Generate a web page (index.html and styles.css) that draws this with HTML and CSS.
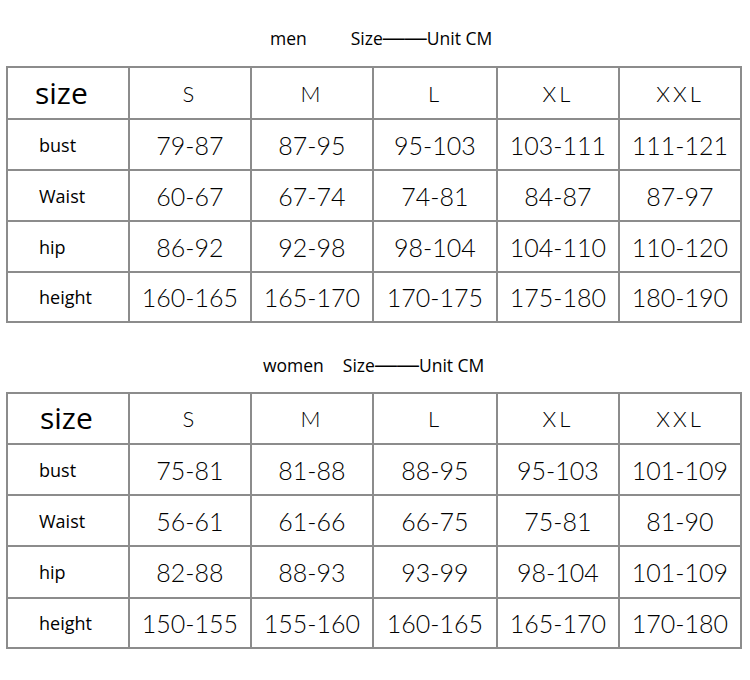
FILE: index.html
```html
<!DOCTYPE html>
<html>
<head>
<meta charset="utf-8">
<link rel="stylesheet" href="styles.css">
</head>
<body>
<div class="page">
  <div class="title title-men"><span class="who">men</span><span class="unit">Size<span class="dash">——</span>Unit CM</span></div>
  <div class="chart chart-men">
    <div class="cell label big">size</div><div class="cell hd">S</div><div class="cell hd">M</div><div class="cell hd">L</div><div class="cell hd">XL</div><div class="cell hd">XXL</div>
    <div class="cell label">bust</div><div class="cell num">79-87</div><div class="cell num">87-95</div><div class="cell num">95-103</div><div class="cell num">103-111</div><div class="cell num">111-121</div>
    <div class="cell label">Waist</div><div class="cell num">60-67</div><div class="cell num">67-74</div><div class="cell num">74-81</div><div class="cell num">84-87</div><div class="cell num">87-97</div>
    <div class="cell label">hip</div><div class="cell num">86-92</div><div class="cell num">92-98</div><div class="cell num">98-104</div><div class="cell num">104-110</div><div class="cell num">110-120</div>
    <div class="cell label">height</div><div class="cell num">160-165</div><div class="cell num">165-170</div><div class="cell num">170-175</div><div class="cell num">175-180</div><div class="cell num">180-190</div>
  </div>
  <div class="title title-women"><span class="who">women</span><span class="unit">Size<span class="dash">——</span>Unit CM</span></div>
  <div class="chart chart-women">
    <div class="cell label big">size</div><div class="cell hd">S</div><div class="cell hd">M</div><div class="cell hd">L</div><div class="cell hd">XL</div><div class="cell hd">XXL</div>
    <div class="cell label">bust</div><div class="cell num">75-81</div><div class="cell num">81-88</div><div class="cell num">88-95</div><div class="cell num">95-103</div><div class="cell num">101-109</div>
    <div class="cell label">Waist</div><div class="cell num">56-61</div><div class="cell num">61-66</div><div class="cell num">66-75</div><div class="cell num">75-81</div><div class="cell num">81-90</div>
    <div class="cell label">hip</div><div class="cell num">82-88</div><div class="cell num">88-93</div><div class="cell num">93-99</div><div class="cell num">98-104</div><div class="cell num">101-109</div>
    <div class="cell label">height</div><div class="cell num">150-155</div><div class="cell num">155-160</div><div class="cell num">160-165</div><div class="cell num">165-170</div><div class="cell num">170-180</div>
  </div>
</div>
</body>
</html>
```

FILE: styles.css
```css
html, body {
  margin: 0;
  padding: 0;
  background: #ffffff;
}
.page {
  width: 750px;
  height: 680px;
  padding-top: 26px;
  box-sizing: border-box;
  font-family: "Open Sans", "Noto Sans", sans-serif;
  color: #000;
}
.title {
  display: flex;
  height: 24px;
  align-items: center;
  font-size: 17.5px;
  line-height: 24px;
}
.dash {
  font-family: "Liberation Sans", sans-serif;
  font-size: 22px;
  letter-spacing: 0;
}
.title-men {
  padding-left: 270px;
  margin-bottom: 16px;
}
.title-men .unit {
  margin-left: 44px;
}
.title-women {
  padding-left: 263px;
  margin-top: 30px;
  margin-bottom: 15px;
}
.title-women .unit {
  margin-left: 19px;
}
.chart {
  margin-left: 6px;
  width: 736px;
  display: grid;
  grid-template-columns: 120px 120px 120px 122px 120px 120px;
  gap: 2px;
  padding: 2px;
  box-sizing: border-box;
  background: #8c8c8c;
}
.chart-men {
  grid-template-rows: 50px 49px 49px 49px 48px;
}
.chart-women {
  grid-template-rows: 49px 49px 49px 50px 48px;
}
.cell {
  background: #fff;
  display: flex;
  align-items: center;
  justify-content: center;
}
.label {
  justify-content: flex-start;
  padding-left: 31px;
  font-size: 18px;
}
.label.big {
  font-size: 30px;
  padding-left: 27px;
  padding-bottom: 2px;
}
.chart-women .label.big {
  padding-left: 32px;
}
.hd {
  font-family: "Lato", "DejaVu Sans", sans-serif;
  font-weight: 300;
  font-size: 22px;
  letter-spacing: 3px;
}
.num {
  font-family: "Lato", "DejaVu Sans", sans-serif;
  font-weight: 300;
  font-size: 25px;
  letter-spacing: 0;
}
```
